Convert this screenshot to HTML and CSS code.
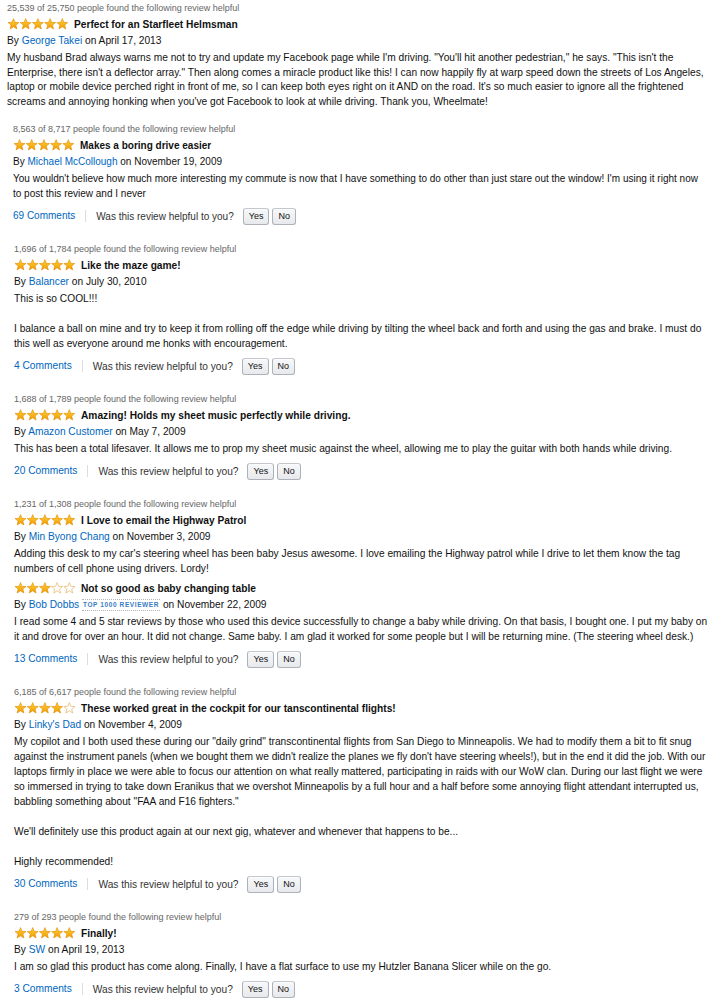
FILE: index.html
```html
<!DOCTYPE html>
<html lang="en">
<head>
    <meta charset="UTF-8">
    <meta name="viewport" content="width=device-width, initial-scale=1.0">
    <title>Customer Reviews</title>
    <link rel="stylesheet" href="styles.css">
</head>
<body>
    <svg class="defs" aria-hidden="true">
        <defs>
            <linearGradient id="gold" x1="0" y1="0" x2="0" y2="1">
                <stop offset="0" stop-color="#ffd23a"/>
                <stop offset="1" stop-color="#f09a00"/>
            </linearGradient>
            <symbol id="star" viewBox="0 0 12 12">
                <polygon points="6,0.6 7.5,4.3 11.5,4.5 8.4,7.1 9.4,11 6,8.8 2.6,11 3.6,7.1 0.5,4.5 4.5,4.3"/>
            </symbol>
        </defs>
    </svg>

    <div class="reviews">
        <div class="review first">
            <div class="helpful">25,539 of 25,750 people found the following review helpful</div>
            <div class="title-row">
                <svg class="stars" viewBox="0 0 61 12"><use href="#star" class="on" x="0" width="12" height="12"/><use href="#star" class="on" x="12.2" width="12" height="12"/><use href="#star" class="on" x="24.4" width="12" height="12"/><use href="#star" class="on" x="36.6" width="12" height="12"/><use href="#star" class="on" x="48.8" width="12" height="12"/></svg>
                <span class="title">Perfect for an Starfleet Helmsman</span>
            </div>
            <div class="byline">By <a href="#">George Takei</a> on April 17, 2013</div>
            <div class="text">My husband Brad always warns me not to try and update my Facebook page while I'm driving. "You'll hit another pedestrian," he says. "This isn't the Enterprise, there isn't a deflector array." Then along comes a miracle product like this! I can now happily fly at warp speed down the streets of Los Angeles, laptop or mobile device perched right in front of me, so I can keep both eyes right on it AND on the road. It's so much easier to ignore all the frightened screams and annoying honking when you've got Facebook to look at while driving. Thank you, Wheelmate!</div>
        </div>

        <div class="review small">
            <div class="helpful">8,563 of 8,717 people found the following review helpful</div>
            <div class="title-row">
                <svg class="stars" viewBox="0 0 61 12"><use href="#star" class="on" x="0" width="12" height="12"/><use href="#star" class="on" x="12.2" width="12" height="12"/><use href="#star" class="on" x="24.4" width="12" height="12"/><use href="#star" class="on" x="36.6" width="12" height="12"/><use href="#star" class="on" x="48.8" width="12" height="12"/></svg>
                <span class="title">Makes a boring drive easier</span>
            </div>
            <div class="byline">By <a href="#">Michael McCollough</a> on November 19, 2009</div>
            <div class="text">You wouldn't believe how much more interesting my commute is now that I have something to do other than just stare out the window! I'm using it right now to post this review and I never</div>
            <div class="actions">
                <a href="#" class="comments">69 Comments</a>
                <span class="ask">Was this review helpful to you?</span>
                <button>Yes</button>
                <button>No</button>
            </div>
        </div>

        <div class="review">
            <div class="helpful">1,696 of 1,784 people found the following review helpful</div>
            <div class="title-row">
                <svg class="stars" viewBox="0 0 61 12"><use href="#star" class="on" x="0" width="12" height="12"/><use href="#star" class="on" x="12.2" width="12" height="12"/><use href="#star" class="on" x="24.4" width="12" height="12"/><use href="#star" class="on" x="36.6" width="12" height="12"/><use href="#star" class="on" x="48.8" width="12" height="12"/></svg>
                <span class="title">Like the maze game!</span>
            </div>
            <div class="byline">By <a href="#">Balancer</a> on July 30, 2010</div>
            <div class="text">This is so COOL!!!<br><br>I balance a ball on mine and try to keep it from rolling off the edge while driving by tilting the wheel back and forth and using the gas and brake. I must do this well as everyone around me honks with encouragement.</div>
            <div class="actions">
                <a href="#" class="comments">4 Comments</a>
                <span class="ask">Was this review helpful to you?</span>
                <button>Yes</button>
                <button>No</button>
            </div>
        </div>

        <div class="review">
            <div class="helpful">1,688 of 1,789 people found the following review helpful</div>
            <div class="title-row">
                <svg class="stars" viewBox="0 0 61 12"><use href="#star" class="on" x="0" width="12" height="12"/><use href="#star" class="on" x="12.2" width="12" height="12"/><use href="#star" class="on" x="24.4" width="12" height="12"/><use href="#star" class="on" x="36.6" width="12" height="12"/><use href="#star" class="on" x="48.8" width="12" height="12"/></svg>
                <span class="title">Amazing! Holds my sheet music perfectly while driving.</span>
            </div>
            <div class="byline">By <a href="#">Amazon Customer</a> on May 7, 2009</div>
            <div class="text">This has been a total lifesaver. It allows me to prop my sheet music against the wheel, allowing me to play the guitar with both hands while driving.</div>
            <div class="actions">
                <a href="#" class="comments">20 Comments</a>
                <span class="ask">Was this review helpful to you?</span>
                <button>Yes</button>
                <button>No</button>
            </div>
        </div>

        <div class="review">
            <div class="helpful">1,231 of 1,308 people found the following review helpful</div>
            <div class="title-row">
                <svg class="stars" viewBox="0 0 61 12"><use href="#star" class="on" x="0" width="12" height="12"/><use href="#star" class="on" x="12.2" width="12" height="12"/><use href="#star" class="on" x="24.4" width="12" height="12"/><use href="#star" class="on" x="36.6" width="12" height="12"/><use href="#star" class="on" x="48.8" width="12" height="12"/></svg>
                <span class="title">I Love to email the Highway Patrol</span>
            </div>
            <div class="byline">By <a href="#">Min Byong Chang</a> on November 3, 2009</div>
            <div class="text">Adding this desk to my car's steering wheel has been baby Jesus awesome. I love emailing the Highway patrol while I drive to let them know the tag numbers of cell phone using drivers. Lordy!</div>

            <div class="reply">
                <div class="title-row">
                    <svg class="stars" viewBox="0 0 61 12"><use href="#star" class="on" x="0" width="12" height="12"/><use href="#star" class="on" x="12.2" width="12" height="12"/><use href="#star" class="on" x="24.4" width="12" height="12"/><use href="#star" class="off" x="36.6" width="12" height="12"/><use href="#star" class="off" x="48.8" width="12" height="12"/></svg>
                    <span class="title">Not so good as baby changing table</span>
                </div>
                <div class="byline">By <a href="#">Bob Dobbs</a> <span class="badge">TOP 1000 REVIEWER</span> on November 22, 2009</div>
                <div class="text">I read some 4 and 5 star reviews by those who used this device successfully to change a baby while driving. On that basis, I bought one. I put my baby on it and drove for over an hour. It did not change. Same baby. I am glad it worked for some people but I will be returning mine. (The steering wheel desk.)</div>
            </div>
            <div class="actions">
                <a href="#" class="comments">13 Comments</a>
                <span class="ask">Was this review helpful to you?</span>
                <button>Yes</button>
                <button>No</button>
            </div>
        </div>

        <div class="review">
            <div class="helpful">6,185 of 6,617 people found the following review helpful</div>
            <div class="title-row">
                <svg class="stars" viewBox="0 0 61 12"><use href="#star" class="on" x="0" width="12" height="12"/><use href="#star" class="on" x="12.2" width="12" height="12"/><use href="#star" class="on" x="24.4" width="12" height="12"/><use href="#star" class="on" x="36.6" width="12" height="12"/><use href="#star" class="off" x="48.8" width="12" height="12"/></svg>
                <span class="title">These worked great in the cockpit for our tanscontinental flights!</span>
            </div>
            <div class="byline">By <a href="#">Linky's Dad</a> on November 4, 2009</div>
            <div class="text">My copilot and I both used these during our "daily grind" transcontinental flights from San Diego to Minneapolis. We had to modify them a bit to fit snug against the instrument panels (when we bought them we didn't realize the planes we fly don't have steering wheels!), but in the end it did the job. With our laptops firmly in place we were able to focus our attention on what really mattered, participating in raids with our WoW clan. During our last flight we were so immersed in trying to take down Eranikus that we overshot Minneapolis by a full hour and a half before some annoying flight attendant interrupted us, babbling something about "FAA and F16 fighters."<br><br>We'll definitely use this product again at our next gig, whatever and whenever that happens to be...<br><br>Highly recommended!</div>
            <div class="actions">
                <a href="#" class="comments">30 Comments</a>
                <span class="ask">Was this review helpful to you?</span>
                <button>Yes</button>
                <button>No</button>
            </div>
        </div>

        <div class="review">
            <div class="helpful">279 of 293 people found the following review helpful</div>
            <div class="title-row">
                <svg class="stars" viewBox="0 0 61 12"><use href="#star" class="on" x="0" width="12" height="12"/><use href="#star" class="on" x="12.2" width="12" height="12"/><use href="#star" class="on" x="24.4" width="12" height="12"/><use href="#star" class="on" x="36.6" width="12" height="12"/><use href="#star" class="on" x="48.8" width="12" height="12"/></svg>
                <span class="title">Finally!</span>
            </div>
            <div class="byline">By <a href="#">SW</a> on April 19, 2013</div>
            <div class="text">I am so glad this product has come along. Finally, I have a flat surface to use my Hutzler Banana Slicer while on the go.</div>
            <div class="actions">
                <a href="#" class="comments">3 Comments</a>
                <span class="ask">Was this review helpful to you?</span>
                <button>Yes</button>
                <button>No</button>
            </div>
        </div>
    </div>
</body>
</html>
```
FILE: styles.css
```css
body {
    margin: 0;
    background: #fff;
    color: #111;
    font-family: "Liberation Sans", Arial, sans-serif;
    font-size: 10.2px;
}
a {
    color: #0066c0;
    text-decoration: none;
}
.defs {
    position: absolute;
    width: 0;
    height: 0;
}
.reviews {
    width: 728px;
}
.review {
    padding: 0 16px 16px 14px;
}
.review.first {
    padding: 0 16px 12px 7px;
}
.review.small {
    font-size: 10px;
    padding: 0 22px 16px 13px;
}
.helpful {
    color: #666;
    font-size: 9px;
    line-height: 16px;
}
.title-row {
    display: flex;
    align-items: center;
    height: 16px;
}
.stars {
    width: 62px;
    height: 12px;
    margin-right: 5px;
    flex-shrink: 0;
}
.stars .on {
    fill: url(#gold);
    stroke: #e08c00;
    stroke-width: 0.6;
}
.stars .off {
    fill: #fff;
    stroke: #e3a64a;
    stroke-width: 0.6;
}
.title {
    font-weight: bold;
}
.byline {
    line-height: 17px;
}
.badge {
    display: inline-block;
    font-size: 6.5px;
    font-weight: bold;
    letter-spacing: 0.6px;
    color: #3a7cc4;
    line-height: 10px;
    padding: 0 1px;
    border-top: 1px dotted #b5b5b5;
    border-bottom: 1px dotted #b5b5b5;
    vertical-align: 1px;
}
.text {
    line-height: 15px;
    margin-top: 1px;
}
.first .text {
    line-height: 14.5px;
    margin-top: 2px;
}
.reply {
    margin-top: 4px;
}
.actions {
    display: flex;
    align-items: center;
    height: 18px;
    margin-top: 6px;
}
.comments {
    padding-right: 10px;
    border-right: 1px solid #ddd;
    line-height: 12px;
}
.ask {
    color: #333;
    margin: 0 9px 0 10px;
}
button {
    font-family: inherit;
    font-size: 9px;
    color: #111;
    height: 17px;
    padding: 0 5px;
    margin-right: 3px;
    border: 1px solid #adb1b8;
    border-top-color: #c4c7cc;
    border-radius: 3px;
    background: linear-gradient(#f7f8fa, #e7e9ec);
    box-shadow: 0 1px 0 rgba(255, 255, 255, 0.6) inset;
}
```
